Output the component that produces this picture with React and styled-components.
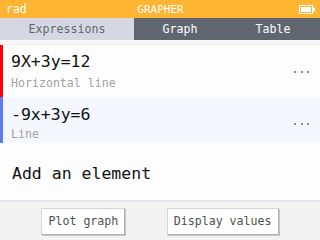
import React from "react";
import styled, { createGlobalStyle } from "styled-components";

const Global = createGlobalStyle`
  html, body { margin: 0; padding: 0; background: #ffffff; }
  body { font-family: "DejaVu Sans Mono", "Liberation Mono", monospace; }
`;

const Screen = styled.div`
  width: 320px;
  height: 240px;
  display: flex;
  flex-direction: column;
  overflow: hidden;
  background: #ffffff;
`;

const TopBar = styled.div`
  height: 18px;
  background: #ffb531;
  color: #ffffff;
  display: grid;
  grid-template-columns: 1fr auto 1fr;
  align-items: center;
  padding: 0 5px 0 6px;
  font-size: 11.5px;
`;

const Title = styled.span`
  text-align: center;
  font-size: 11px;
`;

const Right = styled.div`
  display: flex;
  justify-content: flex-end;
`;

const Tabs = styled.div`
  height: 22px;
  display: flex;
  background: #5f6670;
`;

const Tab = styled.div`
  flex: 0 0 ${(p) => p.$w}px;
  display: flex;
  align-items: center;
  justify-content: center;
  font-size: 11.6px;
  color: ${(p) => (p.$active ? "#5f6670" : "#ffffff")};
  background: ${(p) => (p.$active ? "#d5d8e3" : "transparent")};
`;

const Strip = styled.div`
  height: 4px;
  background: #f7f7f7;
  border-bottom: 1px solid #ececec;
`;

const Row = styled.div`
  height: ${(p) => p.$h}px;
  display: flex;
  align-items: stretch;
  background: ${(p) => p.$bg || "#fdfdfd"};
`;

const ColorBar = styled.div`
  width: 3px;
  background: ${(p) => p.$color};
`;

const RowBody = styled.div`
  flex: 1;
  display: flex;
  flex-direction: column;
  padding: ${(p) => p.$top}px 0 0 8px;
`;

const Formula = styled.div`
  font-size: 16.5px;
  color: #111111;
  line-height: 20px;
`;

const Sub = styled.div`
  margin-top: ${(p) => p.$gap}px;
  font-size: 11.6px;
  color: #a3a3a3;
  line-height: 16px;
`;

const Dots = styled.div`
  width: 26px;
  display: flex;
  align-items: center;
  gap: 4.5px;
  margin-top: ${(p) => p.$shift}px;
  span {
    width: 2px;
    height: 2px;
    background: #8c8c8c;
  }
`;

const AddRow = styled.div`
  flex: 1;
  display: flex;
  align-items: center;
  padding: 4px 0 0 12px;
  font-size: 16.5px;
  color: #111111;
  background: #fdfdfd;
  border-bottom: 2px solid #e3e6ef;
`;

const BottomBar = styled.div`
  height: 38px;
  background: #f3f3f3;
  display: flex;
  align-items: center;
  justify-content: space-evenly;
`;

const Button = styled.div`
  height: 25px;
  padding: 0 6px;
  display: flex;
  align-items: center;
  font-size: 11.6px;
  color: #4f4f4f;
  background: #ffffff;
  border: 1px solid #d4d4d4;
  border-right-color: #b3b3b3;
  border-bottom-color: #b3b3b3;
  box-shadow: 1px 1px 0 #c4c4c4;
`;

function Battery() {
  return (
    <svg width="16" height="9" viewBox="0 0 16 9">
      <rect x="0.5" y="0.5" width="13" height="8" fill="none" stroke="#fff" />
      <rect x="2" y="2" width="10" height="5" fill="#fff" />
      <rect x="14" y="2.5" width="2" height="4" fill="#fff" />
    </svg>
  );
}

export default function App() {
  return (
    <Screen>
      <Global />
      <TopBar>
        <span>rad</span>
        <Title>GRAPHER</Title>
        <Right>
          <Battery />
        </Right>
      </TopBar>
      <Tabs>
        <Tab $w={134} $active>Expressions</Tab>
        <Tab $w={92}>Graph</Tab>
        <Tab $w={94}>Table</Tab>
      </Tabs>
      <Strip />
      <Row $h={52}>
        <ColorBar $color="#ff0000" />
        <RowBody $top={7}>
          <Formula>9X+3y=12</Formula>
          <Sub $gap={3}>Horizontal line</Sub>
        </RowBody>
        <Dots $shift={2}><span /><span /><span /></Dots>
      </Row>
      <Row $h={46} $bg="#f4f7fe">
        <ColorBar $color="#5b7cf7" />
        <RowBody $top={8}>
          <Formula>-9x+3y=6</Formula>
          <Sub $gap={1}>Line</Sub>
        </RowBody>
        <Dots $shift={8}><span /><span /><span /></Dots>
      </Row>
      <AddRow>Add an element</AddRow>
      <BottomBar>
        <Button>Plot graph</Button>
        <Button>Display values</Button>
      </BottomBar>
    </Screen>
  );
}
